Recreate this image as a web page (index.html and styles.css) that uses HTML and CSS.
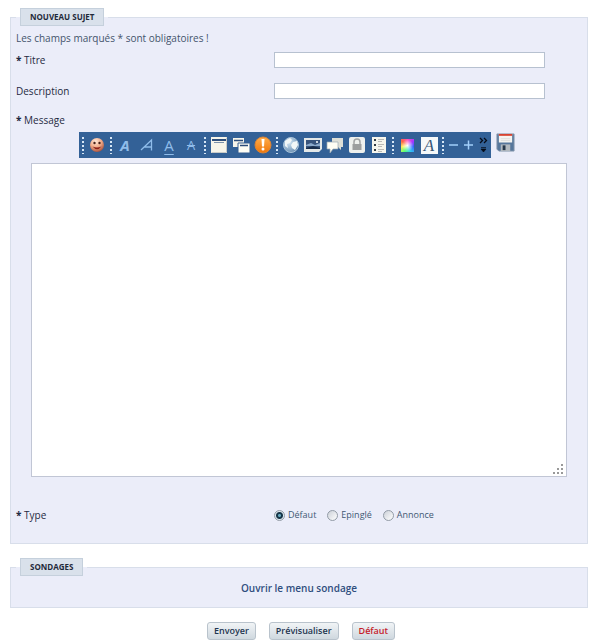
FILE: index.html
```html
<!DOCTYPE html>
<html lang="fr">
<head>
<meta charset="utf-8">
<title>Nouveau sujet</title>
<link rel="stylesheet" href="styles.css">
</head>
<body>
<form>
<fieldset class="panel topic">
  <legend><span class="tab">NOUVEAU SUJET</span></legend>
  <p class="intro">Les champs marqués * sont obligatoires !</p>
  <div class="row">
    <label for="titre"><b>*</b> Titre</label>
    <input class="field" type="text" id="titre">
  </div>
  <div class="row">
    <label for="description">Description</label>
    <input class="field" type="text" id="description">
  </div>
  <label class="message-label" for="message"><b>*</b> Message</label>
  <div class="editor-bar">
    <div class="toolbar" role="toolbar" aria-label="Mise en forme">
      <span class="sep"></span>
      <button type="button" class="tool" aria-label="Smileys"><svg width="18" height="18" viewBox="0 0 18 18"><defs><radialGradient id="face" cx=".4" cy=".25" r=".8"><stop offset="0" stop-color="#ffe9d8"/><stop offset=".5" stop-color="#f3ad8b"/><stop offset="1" stop-color="#a24936"/></radialGradient></defs><circle cx="9" cy="9" r="7" fill="url(#face)"/><circle cx="6.5" cy="7" r="1.2" fill="#482019"/><circle cx="11.5" cy="7" r="1.2" fill="#482019"/><path d="M4.5 10.5q4.500 5.500 9 0q-4.500 2-9 0z" fill="#8d2019"/></svg></button>
      <span class="sep"></span>
      <button type="button" class="tool letter bold" aria-label="Gras">A</button>
      <button type="button" class="tool" aria-label="Italique"><svg width="18" height="18" viewBox="0 0 18 18" fill="none" stroke="#8fbcea" stroke-width="1.300"><path d="M3 14L13.500 4V14.500M6.500 11H13.500"/></svg></button>
      <button type="button" class="tool letter underline" aria-label="Souligné">A</button>
      <button type="button" class="tool letter strike" aria-label="Barré">A</button>
      <span class="sep"></span>
      <button type="button" class="tool" aria-label="Cadre"><svg width="18" height="18" viewBox="0 0 18 18"><path d="M1 1H17V17H1z" fill="#f7f5ea"/><path d="M1.500 16.500H16.500V1.500" stroke="#c9cbc8" fill="none"/><path d="M2 4H16" stroke="#2d4e7b" stroke-width="2"/><path d="M4 6.500H14" stroke="#7c91aa"/></svg></button>
      <button type="button" class="tool" aria-label="Citation"><svg width="18" height="18" viewBox="0 0 18 18"><path d="M1 2H12V11H1z" fill="#f7f5ea"/><path d="M2 4.500H11" stroke="#2d4e7b" stroke-width="1.500"/><path d="M6 7H18V17H6z" fill="#fffef5" stroke="#365f91"/><path d="M8 9.500H16" stroke="#2d4e7b" stroke-width="1.500"/></svg></button>
      <button type="button" class="tool" aria-label="Avertissement"><svg width="18" height="18" viewBox="0 0 18 18"><defs><linearGradient id="warn" x2="0" y2="1"><stop offset="0" stop-color="#ffae4d"/><stop offset="1" stop-color="#ef7609"/></linearGradient></defs><circle cx="9" cy="9" r="8" fill="url(#warn)" stroke="#d98336"/><path d="M7.500 3H10.500L10 10.500H8z" fill="#fff"/><circle cx="9" cy="13" r="1.500" fill="#fff"/></svg></button>
      <span class="sep"></span>
      <button type="button" class="tool" aria-label="Lien"><svg width="18" height="18" viewBox="0 0 18 18"><defs><radialGradient id="globe" cx=".35" cy=".3" r=".8"><stop offset="0" stop-color="#d9ebf8"/><stop offset="1" stop-color="#5f86ac"/></radialGradient></defs><circle cx="9" cy="9" r="7.500" fill="url(#globe)" stroke="#a9c3d9"/><path d="M3 5L8 2L10 4L8 7L5 8L6 12L3 10zM11 6L15 5L16 9L13 14L10 12L9 9z" fill="#f2f7f7"/></svg></button>
      <button type="button" class="tool" aria-label="Image"><svg width="20" height="18" viewBox="0 0 20 18"><path d="M1 2H19V13L16 16H1z" fill="#e4e8e8"/><path d="M3 4H17V13H3z" fill="#36537b"/><path d="M3 9L8 7L12 9L17 7V10H3z" fill="#8aa9ca"/><path d="M3 12L10 10L17 12V13H3z" fill="#172d4b"/><circle cx="14" cy="6" r="1" fill="#fff"/></svg></button>
      <button type="button" class="tool" aria-label="Commentaire"><svg width="18" height="18" viewBox="0 0 18 18"><path d="M6 2H17V11H15L15 14L12 11H6z" fill="#dedfd7"/><path d="M1 6H12V13H7L4 17V13H1z" fill="#fffef4" stroke="#9ba9b3" stroke-width=".7"/></svg></button>
      <button type="button" class="tool" aria-label="Texte caché"><svg width="18" height="18" viewBox="0 0 18 18"><rect x="1" y="1" width="16" height="16" rx="2" fill="#eef0ed"/><path d="M6 9V6a3 3 0 0 1 6 0V9" fill="none" stroke="#a2a4a4" stroke-width="1.500"/><rect x="4.500" y="8" width="9" height="6" fill="#9c9e9e"/></svg></button>
      <button type="button" class="tool" aria-label="Liste"><svg width="18" height="18" viewBox="0 0 18 18"><path d="M2 1H16V17H2z" fill="#f7f6ed"/><path d="M4 4H6M4 9H6M4 14H6" stroke="#333b42" stroke-width="2"/><path d="M8 3.500H14M8 5.500H12M8 8.500H14M8 10.500H12M8 13.500H14M8 15.500H12" stroke="#bbbab6"/></svg></button>
      <span class="sep"></span>
      <button type="button" class="tool" aria-label="Couleur"><span class="swatch"></span></button>
      <button type="button" class="tool" aria-label="Police"><span class="font-tile">A</span></button>
      <span class="sep"></span>
      <button type="button" class="tool small" aria-label="Réduire"><svg width="12" height="18" viewBox="0 0 12 18"><path d="M1 9H10" stroke="#a2cffa" stroke-width="1.500"/></svg></button>
      <button type="button" class="tool small" aria-label="Agrandir"><svg width="12" height="18" viewBox="0 0 12 18"><path d="M1 9H10M5.500 4.500V13.500" stroke="#a2cffa" stroke-width="1.500"/></svg></button>
      <button type="button" class="tool small" aria-label="Plus d’outils"><svg width="10" height="18" viewBox="0 0 10 18"><path d="M1 2L3.500 4.500L1 7M5 2L7.500 4.500L5 7" fill="none" stroke="#050b18" stroke-width="1.300"/><path d="M2 11.500H7M2 13H7L4.500 16z" fill="#050b18" stroke="#050b18" stroke-width=".7"/></svg></button>
    </div>
    <button type="button" class="save" aria-label="Sauvegarder"><svg width="19" height="19" viewBox="0 0 20 20"><path d="M1 1H19V19H3L1 17z" fill="#57779c" stroke="#8496ab"/><path d="M3 1H17V10H3z" fill="#f5f4f1"/><path d="M3 1H17V3H3z" fill="#d84432"/><path d="M5 6H15M5 8H15" stroke="#ddd"/><path d="M5 12H15V19H5z" fill="#b2b9bf"/><path d="M7 13H10V18H7z" fill="#27384b"/></svg></button>
  </div>
  <textarea class="message" id="message"></textarea>
  <div class="row type-row">
    <span id="type-label"><b>*</b> Type</span>
    <div class="choices" role="radiogroup" aria-labelledby="type-label">
      <label><input type="radio" name="type" checked>Défaut</label>
      <label><input type="radio" name="type">Epinglé</label>
      <label><input type="radio" name="type">Annonce</label>
    </div>
  </div>
</fieldset>
<fieldset class="panel poll">
  <legend><span class="tab">SONDAGES</span></legend>
  <a class="poll-link" href="#sondage">Ouvrir le menu sondage</a>
</fieldset>
<div class="actions">
  <button type="submit">Envoyer</button>
  <button type="button">Prévisualiser</button>
  <button type="reset" class="reset">Défaut</button>
</div>
</form>
</body>
</html>
```
FILE: styles.css
```css
* { box-sizing: border-box; }
body {
  margin: 8px 6px 0 10px;
  background: #fff;
  color: #1f2a42;
  font: 500 10px/16px "Trebuchet MS", "Open Sans", sans-serif;
}
button, input, textarea { font: inherit; }
svg { display: block; }
.panel {
  margin: 0 0 14px;
  min-width: 0;
  padding: 4px 5px 0;
  border: 1px solid #d8deea;
  background: #ebedf9;
}
.topic { padding-bottom: 20px; }
.poll { padding-bottom: 11px; }
legend { padding: 0 4px; }
.tab {
  display: block;
  padding: 0 9px;
  border: 1px solid #c5d0dc;
  background: #d9e1eb;
  color: #1f2a3a;
  font-size: 8px;
  font-weight: 700;
}
.intro { margin: 0 0 6px; color: #44546c; }
.row {
  display: grid;
  grid-template-columns: 258fr 308fr;
  align-items: center;
  margin-bottom: 15px;
}
.field {
  width: 88%;
  height: 16px;
  padding: 0 3px;
  border: 1px solid #b7c1d0;
  background: #fff;
}
.message-label { display: block; margin: -2px 0 4px; }
.editor-bar {
  display: flex;
  justify-content: center;
  align-items: flex-start;
  gap: 5px;
  padding-right: 4px;
}
.toolbar {
  display: flex;
  align-items: center;
  height: 26px;
  padding-left: 1px;
  background: #336197;
}
.sep {
  width: 6px;
  height: 18px;
  background:
    linear-gradient(#d6e6f5 2px, transparent 2px) 2px 1px / 2px 4px repeat-y;
}
.tool, .save {
  display: flex;
  align-items: center;
  justify-content: center;
  padding: 0;
  border: 0;
  background: none;
}
.tool { width: 22px; height: 22px; }
.small { width: 15px; }
.save { margin-top: 1px; }
.letter { color: #8fbcea; font-size: 15px; line-height: 18px; }
.bold { font-style: italic; font-weight: 700; }
.underline { text-decoration: underline; text-underline-offset: 3px; text-decoration-thickness: 1px; }
.strike { font-size: 13px; text-decoration: line-through; text-decoration-thickness: 1px; }
.swatch {
  width: 13px;
  height: 13px;
  background:
    radial-gradient(circle, #fff, transparent 65%),
    conic-gradient(#f5b, #a3f, #36f, #3ce, #5f7, #fe5, #f64, #f5b);
}
.font-tile {
  width: 17px;
  height: 17px;
  background: #f5f8f9;
  color: #365575;
  font: italic 17px/17px "Liberation Serif", serif;
}
.message {
  display: block;
  width: calc(100% - 30px);
  height: 314px;
  margin: 5px 15px 30px;
  padding: 3px;
  border: 1px solid #c1c6d5;
  background: #fff;
  resize: both;
}
.message::-webkit-resizer {
  background:
    linear-gradient(#999, #999) 10px 3px / 2px 2px no-repeat,
    linear-gradient(#999, #999) 6px 7px / 2px 2px no-repeat,
    linear-gradient(#999, #999) 10px 7px / 2px 2px no-repeat,
    linear-gradient(#999, #999) 2px 11px / 2px 2px no-repeat,
    linear-gradient(#999, #999) 6px 11px / 2px 2px no-repeat,
    linear-gradient(#999, #999) 10px 11px / 2px 2px no-repeat;
}
.type-row { margin-bottom: 0; }
.choices { display: flex; gap: 11px; color: #3f5873; font-size: 9px; }
.choices label { display: flex; align-items: center; gap: 3px; }
.choices input {
  appearance: none;
  width: 11px;
  height: 11px;
  margin: 0;
  border: 1px solid #929ba6;
  border-radius: 50%;
  background: linear-gradient(135deg, #ccd1d8, #fff);
}
.choices input:checked {
  background: radial-gradient(circle, #67a8bd 1px, #173549 2px, #173549 3px, #dfe9ef 4px);
}
.poll-link {
  display: block;
  color: #2f4d7e;
  font-weight: 600;
  text-align: center;
  text-decoration: none;
}
.actions { display: flex; justify-content: center; gap: 13px; padding-left: 4px; }
.actions button {
  height: 18px;
  padding: 0 6px;
  border: 1px solid #b9c3cc;
  border-radius: 3px;
  background: linear-gradient(#f1f4f6, #cfd8df);
  color: #1d3550;
  font-size: 9px;
  font-weight: 600;
  line-height: 14px;
}
.actions .reset { color: #c51c2b; }
```
